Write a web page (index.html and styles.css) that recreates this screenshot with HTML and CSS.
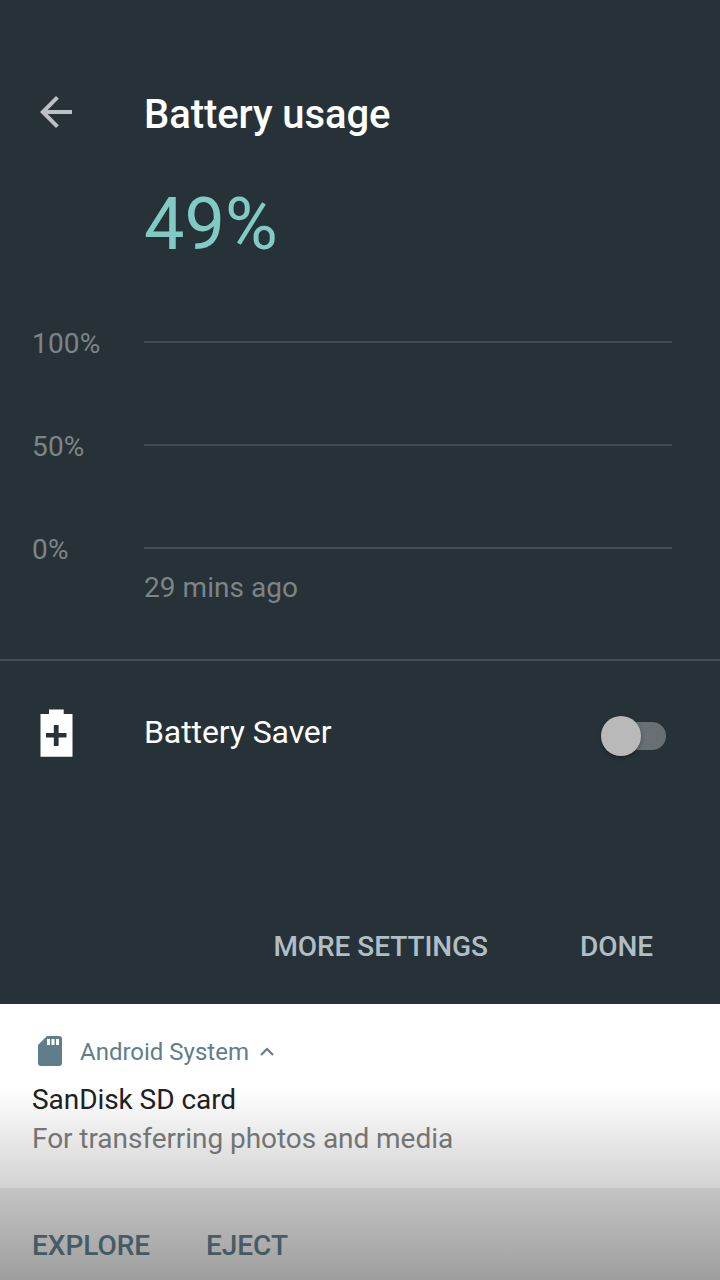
FILE: index.html
```
<!DOCTYPE html>
<html lang="en">
<head>
    <meta charset="UTF-8">
    <meta name="viewport" content="width=device-width, initial-scale=1.0">
    <title>Battery usage</title>
    <link rel="stylesheet" href="styles.css">
</head>
<body>
<div class="screen">
    <div class="panel">
        <div class="header">
            <svg class="back" width="32" height="32" viewBox="4 4 16 16"><path fill="#bec1c3" d="M20 11H7.83l5.59-5.59L12 4l-8 8 8 8 1.41-1.41L7.83 13H20v-2z"/></svg>
            <h1>Battery usage</h1>
        </div>
        <div class="level">49%</div>

        <div class="chart">
            <div class="chart-row"><span>100%</span><div class="line"></div></div>
            <div class="chart-row"><span>50%</span><div class="line"></div></div>
            <div class="chart-row"><span>0%</span><div class="line"></div></div>
        </div>
        <div class="chart-time">29 mins ago</div>

        <div class="saver">
            <svg class="battery" width="33" height="48" viewBox="0 0 33 48">
                <path fill="#fff" fill-rule="evenodd" d="M9 .5h14.700v4.500h8.800v42.700H.5V5H9zM13.800 16v8H6v4.600h7.800V37h4.800v-8.400h7.900V24h-7.900v-8z"/>
            </svg>
            <span class="saver-name">Battery Saver</span>
            <div class="switch"><div class="thumb"></div></div>
        </div>

        <div class="buttons">
            <span>MORE SETTINGS</span>
            <span>DONE</span>
        </div>
    </div>

    <div class="notification">
        <div class="app">
            <svg class="card" width="24" height="30" viewBox="0 0 24 30">
                <path fill="#607d8b" d="M9 0h12a3 3 0 0 1 3 3v24a3 3 0 0 1-3 3H3a3 3 0 0 1-3-3V9z"/>
                <path fill="#fff" d="M9 3h3v6H9zM13.500 3h3v6h-3zM18 3h3v6h-3z"/>
            </svg>
            <span>Android System</span>
            <svg class="arrow" width="14" height="9" viewBox="0 0 14 9"><path fill="none" stroke="#607d8b" stroke-width="2.200" d="M1 8l6-6 6 6"/></svg>
        </div>
        <div class="title">SanDisk SD card</div>
        <div class="text">For transferring photos and media</div>
        <div class="actions">
            <span>EXPLORE</span>
            <span>EJECT</span>
        </div>
        <!-- scrim over the bottom of the shade -->
        <div class="scrim"></div>
    </div>
</div>
</body>
</html>
```
FILE: styles.css
```
* {
    margin: 0;
    padding: 0;
    box-sizing: border-box;
}
body {
    background-color: #263238;
    font-family: Roboto, "Noto Sans", sans-serif;
    color: white;
}
svg {
    display: block;
    flex: none;
}
.screen {
    width: 720px;
    height: 1280px;
    overflow: hidden;
}
.panel {
    height: 1004px;
    padding-top: 86px;
    background-color: #273238;
}
.header {
    display: flex;
    height: 56px;
    padding-left: 40px;
    line-height: 58px;
}
.back {
    margin-top: 10px;
    margin-right: 72px;
}
h1 {
    font-size: 40px;
    font-weight: 500;
    letter-spacing: -0.08px;
}
.level {
    margin-top: 41px;
    padding-left: 144px;
    font-size: 72px;
    line-height: 84px;
    color: #80cbc4;
}
.chart {
    display: grid;
    gap: 70px;
    margin-top: 60px;
    padding: 0 48px 0 32px;
}
.chart-row {
    display: grid;
    grid-template-columns: 112px 1fr;
    align-items: center;
    height: 33px;
    line-height: 33px;
    font-size: 28px;
    letter-spacing: 0.15px;
    color: #7d8488;
}
.line {
    height: 2px;
    margin-bottom: 3px;
    background-color: #414b50;
}
.chart-time {
    height: 93px;
    padding-left: 144px;
    font-size: 28px;
    line-height: 43px;
    letter-spacing: 0.05px;
    color: #7d8488;
}
.saver {
    display: flex;
    height: 146px;
    padding: 0 54px 0 40px;
    border-top: 2px solid #414b50;
    line-height: 142px;
    font-size: 32px;
    letter-spacing: -0.1px;
}
.battery {
    margin-top: 48px;
    margin-right: 71px;
}
.saver-name {
    flex: 1;
}
.switch {
    width: 60px;
    height: 28px;
    margin-top: 61px;
    border-radius: 14px;
    background-color: #687073;
}
.thumb {
    width: 40px;
    height: 40px;
    margin: -6px 0 0 -5px;
    border-radius: 50%;
    background-color: #b9b9b9;
    box-shadow: 0 2px 4px rgba(0, 0, 0, 0.3);
}
.buttons {
    display: flex;
    justify-content: flex-end;
    gap: 92px;
    padding: 105px 67px 0 0;
    font-size: 28px;
    font-weight: 500;
    line-height: 73px;
    letter-spacing: -0.06px;
    color: #b0bec5;
}
.notification {
    position: relative;
    height: 276px;
    background-color: white;
}
.app {
    display: flex;
    align-items: center;
    height: 76px;
    padding: 20px 38px 0;
    font-size: 24px;
    line-height: 56px;
    color: #607d8b;
}
.app span {
    margin-left: 18px;
}
.card {
    margin-bottom: 2px;
}
.arrow {
    margin-left: 11px;
    margin-bottom: 1px;
}
.title, .text {
    padding-left: 32px;
    font-size: 28px;
    line-height: 39px;
    letter-spacing: -0.06px;
}
.title {
    color: #212121;
}
.text {
    color: #7f7f7f;
}
.actions {
    display: flex;
    gap: 56px;
    height: 92px;
    margin-top: 30px;
    padding: 23px 32px 0;
    background-color: #eee;
    font-size: 28px;
    font-weight: 500;
    line-height: 69px;
    letter-spacing: -0.05px;
    color: #607d8b;
}
.scrim {
    position: absolute;
    left: 0;
    right: 0;
    bottom: 0;
    height: 192px;
    background: linear-gradient(rgba(0, 0, 0, 0), rgba(0, 0, 0, 0.336));
}
```
